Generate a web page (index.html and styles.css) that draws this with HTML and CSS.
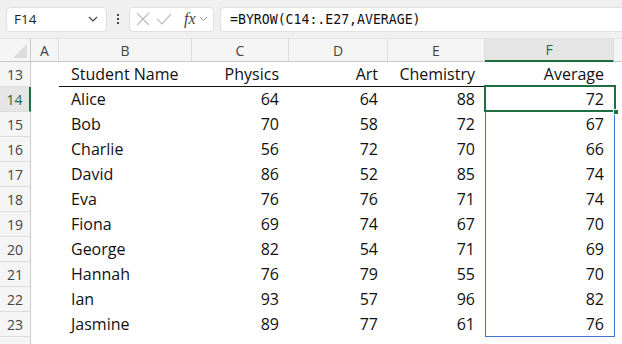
FILE: index.html
```html
<!DOCTYPE html>
<html>
<head>
<meta charset="utf-8">
<link rel="stylesheet" href="styles.css">
</head>
<body>
<div class="toolbar">
  <div class="namebox"><span>F14</span>
    <svg class="chev" width="10" height="6" viewBox="0 0 10 6"><path d="M1 1l4 4 4-4" fill="none" stroke="#444" stroke-width="1.2"/></svg>
  </div>
  <div class="dots"><i></i><i></i><i></i></div>
  <div class="fxbox">
    <svg width="14" height="14" viewBox="0 0 14 14"><path d="M1 1l12 12M13 1L1 13" stroke="#bdbdbd" stroke-width="1.2" fill="none"/></svg>
    <svg width="16" height="12" viewBox="0 0 16 12"><path d="M1 6l5 5L15 1" stroke="#bdbdbd" stroke-width="1.2" fill="none"/></svg>
    <span class="fx">fx</span>
    <svg width="9" height="6" viewBox="0 0 9 6"><path d="M1 1l3.5 3.5L8 1" fill="none" stroke="#999" stroke-width="1"/></svg>
  </div>
  <div class="formula">=BYROW(C14:.E27,AVERAGE)</div>
</div>
<div class="sheet">
  <div class="grid">
    <div class="ch corner"><span class="tri"></span></div>
    <div class="ch">A</div><div class="ch">B</div><div class="ch">C</div><div class="ch">D</div><div class="ch">E</div><div class="ch sel">F</div><div class="ch last"></div>

    <div class="rh">13</div><div class="c"></div><div class="c l hd">Student Name</div><div class="c r hd">Physics</div><div class="c r hd">Art</div><div class="c r hd">Chemistry</div><div class="c r hd">Average</div><div class="c"></div>
    <div class="rh sel">14</div><div class="c"></div><div class="c l">Alice</div><div class="c r">64</div><div class="c r">64</div><div class="c r">88</div><div class="c r">72</div><div class="c"></div>
    <div class="rh">15</div><div class="c"></div><div class="c l">Bob</div><div class="c r">70</div><div class="c r">58</div><div class="c r">72</div><div class="c r">67</div><div class="c"></div>
    <div class="rh">16</div><div class="c"></div><div class="c l">Charlie</div><div class="c r">56</div><div class="c r">72</div><div class="c r">70</div><div class="c r">66</div><div class="c"></div>
    <div class="rh">17</div><div class="c"></div><div class="c l">David</div><div class="c r">86</div><div class="c r">52</div><div class="c r">85</div><div class="c r">74</div><div class="c"></div>
    <div class="rh">18</div><div class="c"></div><div class="c l">Eva</div><div class="c r">76</div><div class="c r">76</div><div class="c r">71</div><div class="c r">74</div><div class="c"></div>
    <div class="rh">19</div><div class="c"></div><div class="c l">Fiona</div><div class="c r">69</div><div class="c r">74</div><div class="c r">67</div><div class="c r">70</div><div class="c"></div>
    <div class="rh">20</div><div class="c"></div><div class="c l">George</div><div class="c r">82</div><div class="c r">54</div><div class="c r">71</div><div class="c r">69</div><div class="c"></div>
    <div class="rh">21</div><div class="c"></div><div class="c l">Hannah</div><div class="c r">76</div><div class="c r">79</div><div class="c r">55</div><div class="c r">70</div><div class="c"></div>
    <div class="rh">22</div><div class="c"></div><div class="c l">Ian</div><div class="c r">93</div><div class="c r">57</div><div class="c r">96</div><div class="c r">82</div><div class="c"></div>
    <div class="rh">23</div><div class="c"></div><div class="c l">Jasmine</div><div class="c r">89</div><div class="c r">77</div><div class="c r">61</div><div class="c r">76</div><div class="c"></div>
    <div class="rh tail"></div><div class="c"></div><div class="c"></div><div class="c"></div><div class="c"></div><div class="c"></div><div class="c"></div><div class="c"></div>
  </div>
  <div class="spill"></div>
  <div class="active"><span class="handle"></span></div>
</div>
</body>
</html>
```
FILE: styles.css
```css
* { box-sizing: border-box; }
html, body { margin: 0; padding: 0; }
body {
  width: 622px;
  height: 344px;
  overflow: hidden;
  background: #ffffff;
  font-family: "Open Sans", "Noto Sans", sans-serif;
  color: #111;
}
.toolbar {
  height: 39px;
  background: #f0f0f0;
  display: flex;
  align-items: center;
  padding-left: 6px;
  border-bottom: 1px solid #e2e2e2;
}
.namebox {
  width: 101px;
  height: 25px;
  background: #fff;
  border: 1px solid #e0e0e0;
  border-radius: 4px;
  display: flex;
  align-items: center;
  justify-content: space-between;
  padding: 0 8px 0 7px;
  font-size: 13.5px;
  color: #222;
}
.dots {
  width: 22px;
  display: flex;
  flex-direction: column;
  align-items: center;
  gap: 2px;
}
.dots i {
  display: block;
  width: 2px;
  height: 2px;
  background: #444;
}
.fxbox {
  width: 85px;
  height: 25px;
  background: #fff;
  border: 1px solid #e0e0e0;
  border-radius: 4px;
  display: flex;
  align-items: center;
  padding: 0 3px 0 6px;
  gap: 7px;
}
.fxbox svg:nth-child(2) { margin-left: -1px; }
.fx {
  font-family: "Liberation Serif", "DejaVu Serif", serif;
  font-style: italic;
  font-size: 16px;
  color: #444;
  margin-left: 5px;
  margin-right: -4px;
}
.formula {
  flex: 1;
  margin-left: 6px;
  height: 25px;
  background: #fff;
  border: 1px solid #e0e0e0;
  border-right: none;
  border-radius: 4px 0 0 4px;
  display: flex;
  align-items: center;
  padding-left: 9px;
  font-family: "DejaVu Sans Mono", "Liberation Mono", monospace;
  font-size: 13.2px;
  color: #111;
}
.sheet {
  position: relative;
}
.grid {
  display: grid;
  grid-template-columns: 31px 28px 133px 97px 99px 97px 129px 8px;
  grid-template-rows: 23px repeat(11, 25px) 7px;
}
.ch {
  background: #f5f5f5;
  border-right: 1px solid #dcdcdc;
  border-bottom: 1px solid #c9c9c9;
  font-size: 14px;
  color: #444;
  display: flex;
  align-items: center;
  justify-content: center;
}
.ch.last { border-right: none; }
.ch.sel {
  background: #e5e5e5;
  color: #1d6b3f;
  border-bottom: 2px solid #1e6e42;
}
.corner {
  position: relative;
  border-right: 1px solid #c9c9c9;
}
.tri {
  position: absolute;
  right: 3px;
  bottom: 3px;
  width: 0;
  height: 0;
  border-left: 14px solid transparent;
  border-bottom: 14px solid #dcdcdc;
}
.rh {
  background: #f5f5f5;
  border-right: 1px solid #c9c9c9;
  border-bottom: 1px solid #dcdcdc;
  font-size: 14px;
  color: #444;
  display: flex;
  align-items: center;
  justify-content: center;
}
.rh.tail { border-bottom: none; }
.rh.sel {
  background: #e5e5e5;
  color: #1d6b3f;
  border-right: 2px solid #1e6e42;
}
.c {
  font-size: 16px;
  line-height: 25px;
  white-space: nowrap;
  color: #111;
}
.c.l { padding-left: 12px; }
.c.r { text-align: right; padding-right: 10px; }
.c.hd { border-bottom: 1px solid #111; line-height: 24px; }
.spill {
  position: absolute;
  left: 485px;
  top: 47px;
  width: 130px;
  height: 251px;
  border: 1px solid #3a74cf;
}
.active {
  position: absolute;
  left: 484px;
  top: 46px;
  width: 132px;
  height: 27px;
  border: 2px solid #1e6e42;
}
.handle {
  position: absolute;
  right: -5px;
  bottom: -5px;
  width: 6px;
  height: 6px;
  background: #1e6e42;
  border: 1px solid #fff;
}
```
